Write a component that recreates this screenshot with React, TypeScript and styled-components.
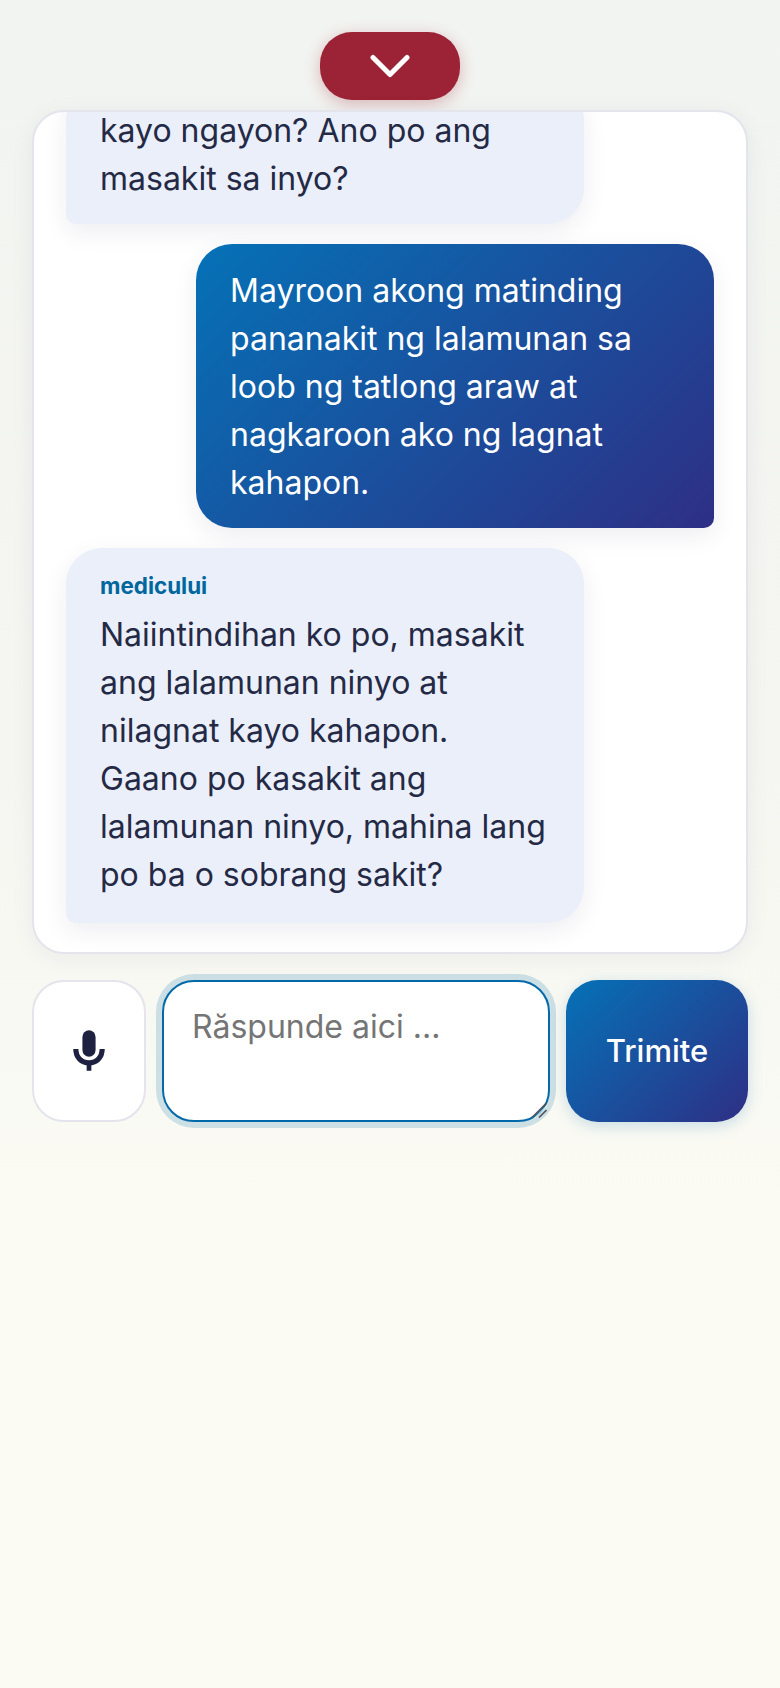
import styled, { createGlobalStyle } from "styled-components";

const GlobalStyle = createGlobalStyle`
  html, body {
    margin: 0;
    padding: 0;
  }

  body {
    font-family: Inter, "Liberation Sans", sans-serif;
    font-variation-settings: "opsz" 14;
    background: #fbfbf4;
  }
`;

export default function App() {
  return (
    <Page>
      <GlobalStyle />
      <ToggleButton aria-label="Ascunde">
        <svg width="40" height="24" viewBox="0 0 40 24" fill="none">
          <path
            d="M3 3.5 L20 20.5 L37 3.5"
            stroke="#fff"
            strokeWidth="5"
            strokeLinecap="round"
            strokeLinejoin="round"
          />
        </svg>
      </ToggleButton>

      <ChatCard>
        <Bubble>kayo ngayon? Ano po ang masakit sa inyo?</Bubble>
        <Bubble mine>
          Mayroon akong matinding pananakit ng lalamunan sa loob ng tatlong araw
          at nagkaroon ako ng lagnat kahapon.
        </Bubble>
        <Bubble labelled>
          <Sender>medicului</Sender>
          Naiintindihan ko po, masakit ang lalamunan ninyo at nilagnat kayo
          kahapon. Gaano po kasakit ang lalamunan ninyo, mahina lang po ba o
          sobrang sakit?
        </Bubble>
      </ChatCard>

      <InputRow>
        <MicButton aria-label="Microfon">
          <svg width="32" height="42" viewBox="0 0 34 44" fill="none">
            <rect x="10" y="0" width="14" height="28" rx="7" fill="#1f2140" />
            <path
              d="M3 20 C3 29 9 34.5 17 34.5 C25 34.5 31 29 31 20"
              stroke="#1f2140"
              strokeWidth="5.5"
            />
            <rect x="14.5" y="34" width="5" height="9" fill="#1f2140" />
          </svg>
        </MicButton>
        <ReplyWrap>
          <ReplyBox placeholder="Răspunde aici ..." />
          <ResizeGrip width="16" height="16" viewBox="0 0 16 16" fill="none">
            <path d="M1 15.5 L15.5 1" stroke="#555" strokeWidth="1.6" />
            <path d="M3.5 16 L16 3.5" stroke="#fff" strokeWidth="1" />
            <path d="M8 15.5 L15.5 8" stroke="#555" strokeWidth="1.6" />
          </ResizeGrip>
        </ReplyWrap>
        <SendButton>Trimite</SendButton>
      </InputRow>
    </Page>
  );
}

const Page = styled.div`
  box-sizing: border-box;
  min-height: 1688px;
  padding: 32px 32px 0;

  display: flex;
  flex-direction: column;
  align-items: center;

  background: linear-gradient(180deg, #f2f4f1 0%, #f5f6f1 45%, #fbfbf4 72%, #fbfbf4 100%);
`;

const ToggleButton = styled.button`
  width: 140px;
  height: 68px;
  margin-bottom: 10px;
  padding: 0;

  display: flex;
  align-items: center;
  justify-content: center;

  background: #9b2335;
  border: none;
  border-radius: 32px;
  box-shadow: 0 4px 16px rgba(155, 35, 53, 0.3);
`;

const ChatCard = styled.div`
  box-sizing: border-box;
  width: 716px;
  height: 844px;
  padding: 0 32px 29px 32px;

  display: flex;
  flex-direction: column;
  justify-content: flex-end;
  gap: 20px;

  overflow: hidden;
  background: #fff;
  border: 2px solid #e3e4ec;
  border-radius: 32px;
  box-shadow: 0 4px 24px rgba(40, 40, 90, 0.06);
`;

const Bubble = styled.div.withConfig({
  shouldForwardProp: (prop) => prop !== "mine" && prop !== "labelled",
})<{ mine?: boolean; labelled?: boolean }>`
  box-sizing: border-box;
  flex-shrink: 0;
  width: 518px;
  padding: ${(props) => (props.labelled ? "20px 32px 24px 34px" : "23px 32px 21px 34px")};
  align-self: ${(props) => (props.mine ? "flex-end" : "flex-start")};

  font-size: 32px;
  font-weight: 380;
  line-height: 48px;
  color: ${(props) => (props.mine ? "#fff" : "#242a45")};
  background: ${(props) =>
    props.mine ? "linear-gradient(135deg, #0572b7 0%, #2e2f85 100%)" : "#ebeff9"};

  border-radius: ${(props) => (props.mine ? "36px 36px 10px 36px" : "36px 36px 36px 10px")};
  box-shadow: 0 8px 24px rgba(40, 40, 90, 0.08);
`;

const Sender = styled.div`
  height: 43px;

  font-size: 22.4px;
  font-weight: 700;
  line-height: 36px;
  color: #00669e;
`;

const InputRow = styled.div`
  width: 716px;
  height: 142px;
  margin-top: 26px;

  display: flex;
  align-items: stretch;
  gap: 16px;
`;

const MicButton = styled.button`
  box-sizing: border-box;
  width: 114px;
  padding: 0;

  display: flex;
  align-items: center;
  justify-content: center;

  background: #fff;
  border: 2px solid #e3e4ec;
  border-radius: 32px;
`;

const ReplyWrap = styled.div`
  position: relative;
  flex: 1;
  min-width: 0;
  display: flex;
`;

const ReplyBox = styled.textarea`
  box-sizing: border-box;
  width: 100%;
  padding: 21px 28px;

  font-family: Inter, "Liberation Sans", sans-serif;
  font-variation-settings: "opsz" 14;
  font-size: 32px;
  font-weight: 380;
  line-height: 48px;
  color: #1f2140;

  background: #fff;
  border: 2px solid #0369a9;
  border-radius: 32px;
  outline: none;
  resize: none;
  box-shadow: 0 0 0 6px rgba(0, 105, 160, 0.18);

  &::placeholder {
    color: #757575;
  }
`;

const ResizeGrip = styled.svg`
  position: absolute;
  right: 3px;
  bottom: 4px;
`;

const SendButton = styled.button`
  box-sizing: border-box;
  width: 182px;
  padding: 0 0 2px;

  font-family: Inter, "Liberation Sans", sans-serif;
  font-variation-settings: "opsz" 14;
  font-size: 31px;
  font-weight: 480;
  color: #fff;

  background: linear-gradient(135deg, #0572b7 0%, #2e2f85 100%);
  border: none;
  border-radius: 32px;
  box-shadow: 0 4px 16px rgba(0, 105, 170, 0.2);
`;
